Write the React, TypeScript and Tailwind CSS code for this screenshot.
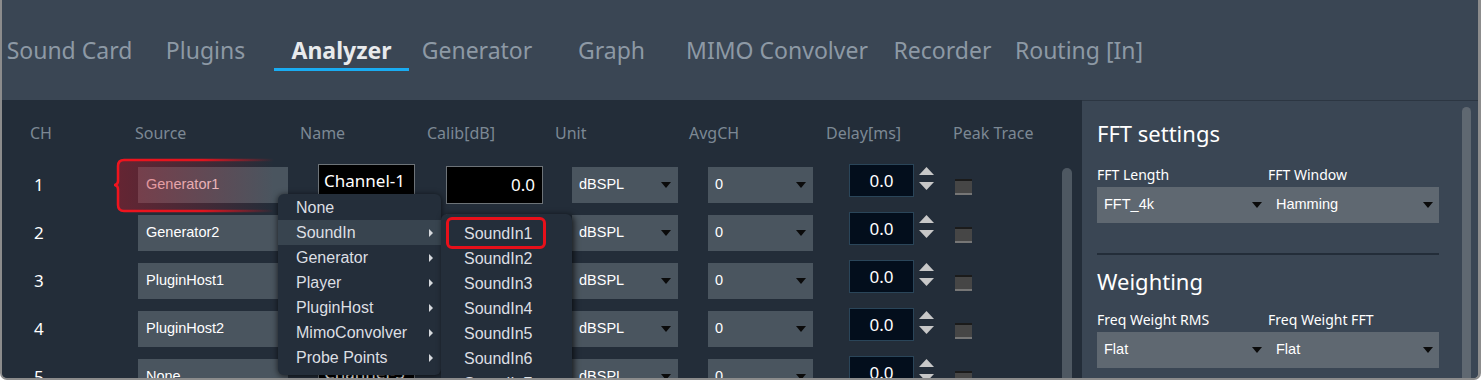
import React from "react";

const SEGOE = "font-['Noto_Sans',sans-serif]";
const ARIAL = "font-['Liberation_Sans',Arial,sans-serif]";

const tabs = [
  { label: "Sound Card", w: "w-[135px]" },
  { label: "Plugins", w: "w-[137px]" },
  { label: "Analyzer", w: "w-[135px]", active: true },
  { label: "Generator", w: "w-[136px]" },
  { label: "Graph", w: "w-[133px]" },
  { label: "MIMO Convolver", w: "w-[198px]" },
  { label: "Recorder", w: "w-[133px]" },
  { label: "Routing [In]", w: "w-[140px]" },
];

const rows = [
  { ch: 1, source: "Generator1", name: "Channel-1" },
  { ch: 2, source: "Generator2", name: "Channel-2" },
  { ch: 3, source: "PluginHost1", name: "Channel-3" },
  { ch: 4, source: "PluginHost2", name: "Channel-4" },
  { ch: 5, source: "None", name: "Channel-5" },
  { ch: 6, source: "None", name: "Channel-6" },
];

const menuItems = ["None", "SoundIn", "Generator", "Player", "PluginHost", "MimoConvolver", "Probe Points"];

function DownTri({ className = "" }: { className?: string }) {
  return (
    <svg width="10" height="6" viewBox="0 0 10 6" className={className}>
      <path d="M0 0H10L5 6Z" fill="#0b0b0b" />
    </svg>
  );
}

function RightTri() {
  return (
    <svg width="4" height="8" viewBox="0 0 4 8">
      <path d="M0 0L4 4L0 8Z" fill="#d6d9dd" />
    </svg>
  );
}

function Select({ value, w }: { value: string; w: string }) {
  return (
    <div className={`flex h-[36px] ${w} items-center justify-between bg-[#4a555f] pl-[7px] pr-[7px] ${ARIAL} text-[14.5px] text-white`}>
      <span>{value}</span>
      <DownTri />
    </div>
  );
}

function Annotation() {
  return (
    <svg width="164" height="58" viewBox="0 0 164 58" className="pointer-events-none absolute left-[-24px] top-[-10px]">
      <defs>
        <linearGradient id="annStroke" x1="0" x2="1" y1="0" y2="0">
          <stop offset="0" stopColor="#f0141e" />
          <stop offset="0.55" stopColor="#e0141e" />
          <stop offset="1" stopColor="#e0141e" stopOpacity="0" />
        </linearGradient>
        <linearGradient id="annFill" x1="0" x2="1" y1="0" y2="0">
          <stop offset="0" stopColor="#c21a2a" stopOpacity="0.42" />
          <stop offset="0.6" stopColor="#c21a2a" stopOpacity="0.18" />
          <stop offset="1" stopColor="#c21a2a" stopOpacity="0" />
        </linearGradient>
      </defs>
      <path
        d="M160 3H10Q4 3 4 9V24Q4 27 1 28Q4 29 4 32V48Q4 54 10 54H160"
        fill="url(#annFill)"
        stroke="url(#annStroke)"
        strokeWidth="2.5"
      />
    </svg>
  );
}

function TableRow({ r }: { r: (typeof rows)[number] }) {
  return (
    <div className="flex h-[48px] shrink-0 items-start">
      <div className={`flex h-[48px] w-[136px] items-center pl-[32px] ${SEGOE} text-[17px] text-white`}>{r.ch}</div>
      <div className="relative mt-[6px]">
        <div className={`flex h-[36px] w-[150px] items-center bg-[#4a555f] pl-[8px] ${ARIAL} text-[14.5px] ${r.ch === 1 ? "text-[#f3d6d8]" : "text-white"}`}>
          {r.source}
        </div>
        {r.ch === 1 && <Annotation />}
      </div>
      <div className={`ml-[30px] mt-[3px] flex h-[34px] w-[97px] items-center border border-[#6d7378] bg-black pl-[5px] ${SEGOE} text-[17px] text-white`}>
        {r.name}
      </div>
      <div className={`ml-[31px] mt-[5px] flex h-[38px] w-[97px] items-center justify-end border border-[#6d7378] bg-black pr-[7px] ${SEGOE} text-[17px] text-white`}>
        0.0
      </div>
      <div className="ml-[29px] mt-[6px]">
        <Select value="dBSPL" w="w-[106px]" />
      </div>
      <div className="ml-[30px] mt-[6px]">
        <Select value="0" w="w-[105px]" />
      </div>
      <div className={`ml-[36px] mt-[3px] flex h-[33px] w-[65px] items-center justify-center border border-[#2a4559] bg-[#030e1c] ${SEGOE} text-[17px] text-white`}>
        0.0
      </div>
      <div className="ml-[5px] mt-[6px] flex flex-col gap-[7px]">
        <svg width="15" height="8" viewBox="0 0 15 8">
          <path d="M7.5 0L15 8H0Z" fill="#c8c8c8" />
        </svg>
        <svg width="15" height="8" viewBox="0 0 15 8">
          <path d="M0 0H15L7.5 8Z" fill="#c8c8c8" />
        </svg>
      </div>
      <div className="ml-[21px] mt-[18px] h-[16px] w-[17px] border-t-2 border-b-2 border-t-[#1b1b1b] border-b-[#767676] bg-[#464646]" />
    </div>
  );
}

function RightSelect({ left, right }: { left: string; right: string }) {
  return (
    <div className={`flex h-[36px] w-[342px] bg-[#5f6871] ${ARIAL} text-[14.5px] text-white`}>
      <div className="flex w-[171px] items-center justify-between pl-[7px] pr-[6px]">
        <span>{left}</span>
        <DownTri />
      </div>
      <div className="flex w-[171px] items-center justify-between pl-[8px] pr-[6px]">
        <span>{right}</span>
        <DownTri />
      </div>
    </div>
  );
}

export default function App() {
  return (
    <div className="flex h-[380px] w-[1481px] flex-col overflow-hidden rounded-b-[7px] border-b-2 border-l-2 border-r-[3px] border-[#8c8c8c] bg-[#3a4654]">
      {/* tab strip */}
      <div className="flex h-[100px] shrink-0 pt-[35px]">
        {tabs.map((t) => (
          <div key={t.label} className={`flex ${t.w} flex-col items-center`}>
            <div
              className={`h-[30px] whitespace-nowrap leading-[30px] ${SEGOE} text-[23px] ${
                t.active ? "font-bold text-[#e8eaec]" : "text-[#8d99a5]"
              }`}
            >
              {t.label}
            </div>
            {t.active && <div className="mt-[3px] h-[3px] w-full bg-[#19acf2]" />}
          </div>
        ))}
      </div>

      <div className="flex min-h-0 flex-1">
        {/* channel table */}
        <div className="relative flex w-[1080px] shrink-0 bg-[#232d39]">
          <div className="flex flex-1 flex-col">
            <div className={`flex h-[61px] shrink-0 items-center pl-[28px] pt-[4px] ${SEGOE} text-[16px] text-[#7c8894]`}>
              <div className="w-[105px]">CH</div>
              <div className="w-[165px]">Source</div>
              <div className="w-[127px]">Name</div>
              <div className="w-[128px]">Calib[dB]</div>
              <div className="w-[134px]">Unit</div>
              <div className="w-[137px]">AvgCH</div>
              <div className="w-[127px]">Delay[ms]</div>
              <div>Peak Trace</div>
            </div>
            {rows.map((r) => (
              <TableRow key={r.ch} r={r} />
            ))}
          </div>
          <div className="mr-[10px] mt-[68px] w-[10px] rounded-t-full bg-[#4e5862]" />

          {/* source context menu */}
          <div className={`absolute left-[276px] top-[94px] w-[163px] rounded-[6px] bg-[#242e3a] pb-[5px] pt-[1px] shadow-[0_1px_6px_rgba(0,0,0,0.7)] ${ARIAL} text-[16px] text-[#dcdfe3]`}>
            {menuItems.map((m) => (
              <div
                key={m}
                className={`flex h-[25px] items-center justify-between pl-[18px] pr-[8px] ${m === "SoundIn" ? "bg-[#38444f]" : ""}`}
              >
                <span>{m}</span>
                {m !== "None" && <RightTri />}
              </div>
            ))}
          </div>
          <div className={`absolute left-[439px] top-[114px] w-[131px] rounded-[6px] bg-[#242e3a] pb-[5px] pt-[7px] shadow-[2px_1px_6px_rgba(0,0,0,0.7)] ${ARIAL} text-[16px] text-[#dcdfe3]`}>
            {[1, 2, 3, 4, 5, 6, 7, 8].map((n) => (
              <div key={n} className="relative flex h-[25px] items-center pl-[23px]">
                <span>SoundIn{n}</span>
                {n === 1 && (
                  <div className="absolute left-[5px] top-[-4px] h-[32px] w-[100px] rounded-[6px] border-[3px] border-[#e8101a]" />
                )}
              </div>
            ))}
          </div>
        </div>

        {/* settings side panel */}
        <div className="flex flex-1 border-t border-[#2c3642] bg-[#3a4654]">
          <div className={`flex flex-1 flex-col pl-[15px] ${SEGOE} text-white`}>
            <div className="mt-[17px] text-[22px] leading-[30px]">FFT settings</div>
            <div className="mt-[17px] flex text-[14px] leading-[20px]">
              <div className="w-[171px]">FFT Length</div>
              <div>FFT Window</div>
            </div>
            <div className="mt-[2px]">
              <RightSelect left="FFT_4k" right="Hamming" />
            </div>
            <div className="mt-[30px] h-[2px] w-[342px] bg-[#232d39]" />
            <div className="mt-[11px] text-[22px] leading-[30px]">Weighting</div>
            <div className="mt-[14px] flex text-[14px] leading-[20px]">
              <div className="w-[171px]">Freq Weight RMS</div>
              <div>Freq Weight FFT</div>
            </div>
            <div className="mt-[2px]">
              <RightSelect left="Flat" right="Flat" />
            </div>
          </div>
          <div className="mr-[7px] mt-[6px] w-[9px] rounded-t-full bg-[#5f6871]" />
        </div>
      </div>
    </div>
  );
}
